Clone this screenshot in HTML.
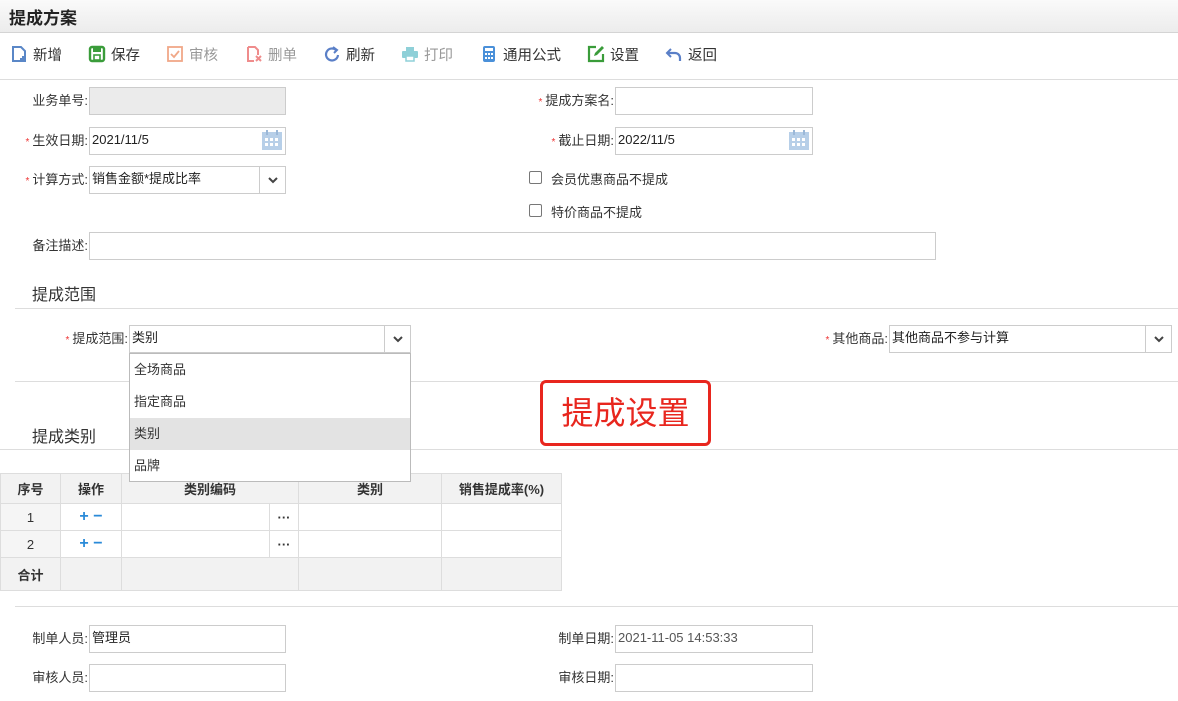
<!DOCTYPE html>
<html><head><meta charset="utf-8"><style>
*{box-sizing:border-box;margin:0;padding:0}
body{width:1178px;height:701px;position:relative;background:#fff;font-family:"Liberation Sans","Noto Sans CJK SC",sans-serif;font-size:13px;color:#333;overflow:hidden}
.a{position:absolute}
.hdr{left:0;top:0;width:1178px;height:33px;background:linear-gradient(#fafafa,#ececec);border-bottom:1px solid #d4d4d4}
.hdr b{position:absolute;left:9px;top:4px;font-size:17px;color:#222}
.tb{top:44px;height:20px;display:flex;align-items:center;font-size:14.5px;color:#333}
.tb svg{margin-right:5px}
.line{height:1px;background:#ddd}
.inp{border:1px solid #ccc;height:28px;background:#fff;padding:0 2px;line-height:24px;font-size:13px;color:#222}
.lbl{font-size:13px;color:#333;text-align:right;line-height:28px}
.lbl i{color:#e33;font-style:normal;font-size:10px;margin-right:3px}
.sec{font-size:16px;color:#333}
.arrow{position:absolute;right:0;top:0;width:26px;height:26px;border-left:1px solid #ccc;display:flex;align-items:center;justify-content:center}
.cb{width:13px;height:13px;border:1px solid #777;border-radius:2px;background:#fff}
table{border-collapse:collapse;font-size:13px}
td{border:1px solid #ddd;text-align:center;color:#333}
.th td{background:#f2f2f2;font-weight:bold;height:30px}
.dd div{height:32px;line-height:32px;padding-left:4px;font-size:13px}
</style></head><body>
<div class="a hdr"><b>提成方案</b></div>
<div class="a tb" style="left:10px"><svg width="18" height="18" viewBox="0 0 18 18"><path d="M3 2h8l4 4v10H3z" fill="none" stroke="#5a87c7" stroke-width="2"/><path d="M13 11v6M10 14h6" stroke="#5a87c7" stroke-width="2"/></svg>新增</div>
<div class="a tb" style="left:88px"><svg width="18" height="18" viewBox="0 0 18 18"><rect x="2" y="2" width="14" height="14" rx="2" fill="none" stroke="#3a9c3a" stroke-width="2.4"/><rect x="5" y="3" width="8" height="4" fill="#3a9c3a"/><rect x="6" y="10" width="6" height="5" fill="none" stroke="#3a9c3a" stroke-width="1.6"/></svg>保存</div>
<div class="a tb" style="left:166px;color:#999"><svg width="18" height="18" viewBox="0 0 18 18"><rect x="2" y="2" width="14" height="14" fill="none" stroke="#f0a888" stroke-width="1.8"/><path d="M5 9l3 3 5-6" fill="none" stroke="#f0a888" stroke-width="1.8"/></svg>审核</div>
<div class="a tb" style="left:245px;color:#999"><svg width="18" height="18" viewBox="0 0 18 18"><path d="M3 2h7l3 3v5M3 2v14h6" fill="none" stroke="#ef8c8c" stroke-width="2"/><path d="M11 11l5 5M16 11l-5 5" stroke="#ef8c8c" stroke-width="2"/></svg>删单</div>
<div class="a tb" style="left:323px"><svg width="18" height="18" viewBox="0 0 18 18"><path d="M13 5a6 6 0 1 0 2 5" fill="none" stroke="#5a7fc7" stroke-width="2.2"/><path d="M10 2l4 3-3 3" fill="none" stroke="#5a7fc7" stroke-width="2"/></svg>刷新</div>
<div class="a tb" style="left:401px;color:#999"><svg width="18" height="18" viewBox="0 0 18 18"><rect x="5" y="2" width="8" height="4" fill="#8fd0d8"/><rect x="1" y="6" width="16" height="7" rx="1" fill="#8fd0d8"/><rect x="5" y="11" width="8" height="5" fill="#fff" stroke="#8fd0d8" stroke-width="1.5"/></svg>打印</div>
<div class="a tb" style="left:480px"><svg width="18" height="18" viewBox="0 0 18 18"><rect x="3" y="1" width="12" height="16" rx="2" fill="#4a90d9"/><rect x="5" y="3" width="8" height="3" fill="#fff"/><g fill="#fff"><rect x="5" y="8" width="2" height="2"/><rect x="8" y="8" width="2" height="2"/><rect x="11" y="8" width="2" height="2"/><rect x="5" y="12" width="2" height="2"/><rect x="8" y="12" width="2" height="2"/><rect x="11" y="12" width="2" height="2"/></g></svg>通用公式</div>
<div class="a tb" style="left:587px"><svg width="18" height="18" viewBox="0 0 18 18"><path d="M9 2H2v14h14V9" fill="none" stroke="#3a9c3a" stroke-width="2.2"/><path d="M7 11l1-3 7-7 2 2-7 7z" fill="#3a9c3a"/></svg>设置</div>
<div class="a tb" style="left:665px"><svg width="18" height="18" viewBox="0 0 18 18"><path d="M6 4L2 8l4 4" fill="none" stroke="#5a7fc7" stroke-width="2"/><path d="M2 8h8a5 5 0 0 1 5 5v3" fill="none" stroke="#5a7fc7" stroke-width="2.2"/></svg>返回</div>
<div class="a line" style="left:0;top:79px;width:1178px"></div>

<div class="a lbl" style="left:0;width:88px;top:87px">业务单号:</div>
<div class="a inp" style="left:89px;top:87px;width:197px;background:#ebebeb"></div>
<div class="a lbl" style="left:500px;width:114px;top:87px"><i>*</i>提成方案名:</div>
<div class="a inp" style="left:615px;top:87px;width:198px"></div>

<div class="a lbl" style="left:0;width:88px;top:127px"><i>*</i>生效日期:</div>
<div class="a inp" style="left:89px;top:127px;width:197px">2021/11/5</div>
<svg class="a" style="left:261px;top:129px" width="22" height="22" viewBox="0 0 22 22"><rect x="1" y="3" width="20" height="18" fill="#b7cfe8"/><rect x="5" y="1" width="2" height="5" fill="#9bb8d8"/><rect x="15" y="1" width="2" height="5" fill="#9bb8d8"/><g fill="#fff"><rect x="4" y="9" width="3" height="3"/><rect x="9" y="9" width="3" height="3"/><rect x="14" y="9" width="3" height="3"/><rect x="4" y="14" width="3" height="3"/><rect x="9" y="14" width="3" height="3"/><rect x="14" y="14" width="3" height="3"/></g></svg>
<div class="a lbl" style="left:500px;width:114px;top:127px"><i>*</i>截止日期:</div>
<div class="a inp" style="left:615px;top:127px;width:198px">2022/11/5</div>
<svg class="a" style="left:788px;top:129px" width="22" height="22" viewBox="0 0 22 22"><rect x="1" y="3" width="20" height="18" fill="#b7cfe8"/><rect x="5" y="1" width="2" height="5" fill="#9bb8d8"/><rect x="15" y="1" width="2" height="5" fill="#9bb8d8"/><g fill="#fff"><rect x="4" y="9" width="3" height="3"/><rect x="9" y="9" width="3" height="3"/><rect x="14" y="9" width="3" height="3"/><rect x="4" y="14" width="3" height="3"/><rect x="9" y="14" width="3" height="3"/><rect x="14" y="14" width="3" height="3"/></g></svg>

<div class="a lbl" style="left:0;width:88px;top:166px"><i>*</i>计算方式:</div>
<div class="a inp" style="left:89px;top:166px;width:197px">销售金额*提成比率<div class="arrow"><svg width="10" height="8"><path d="M1 2l4 4 4-4" fill="none" stroke="#444" stroke-width="2"/></svg></div></div>
<div class="a cb" style="left:529px;top:171px"></div>
<div class="a" style="left:551px;top:169px">会员优惠商品不提成</div>
<div class="a cb" style="left:529px;top:204px"></div>
<div class="a" style="left:551px;top:202px">特价商品不提成</div>

<div class="a lbl" style="left:0;width:88px;top:232px">备注描述:</div>
<div class="a inp" style="left:89px;top:232px;width:847px"></div>

<div class="a sec" style="left:32px;top:281px">提成范围</div>
<div class="a line" style="left:15px;top:308px;width:1163px"></div>
<div class="a lbl" style="left:0;width:128px;top:325px"><i>*</i>提成范围:</div>
<div class="a inp" style="left:129px;top:325px;width:282px">类别<div class="arrow"><svg width="10" height="8"><path d="M1 2l4 4 4-4" fill="none" stroke="#444" stroke-width="2"/></svg></div></div>
<div class="a lbl" style="left:760px;width:128px;top:325px"><i>*</i>其他商品:</div>
<div class="a inp" style="left:889px;top:325px;width:283px">其他商品不参与计算<div class="arrow"><svg width="10" height="8"><path d="M1 2l4 4 4-4" fill="none" stroke="#444" stroke-width="2"/></svg></div></div>
<div class="a line" style="left:15px;top:381px;width:1163px"></div>

<div class="a sec" style="left:32px;top:423px">提成类别</div>
<div class="a line" style="left:0;top:449px;width:1178px"></div>

<table class="a" style="left:0;top:473px;width:562px">
<tr class="th"><td style="width:60px">序号</td><td style="width:61px">操作</td><td colspan="2" style="width:177px">类别编码</td><td style="width:143px">类别</td><td style="width:120px">销售提成率(%)</td></tr>
<tr style="height:27px"><td style="background:#f5f5f5">1</td><td style="color:#2a8ad8;font-weight:bold;font-size:16px">+ −</td><td style="width:148px"></td><td style="font-weight:bold">···</td><td></td><td></td></tr>
<tr style="height:27px"><td style="background:#f5f5f5">2</td><td style="color:#2a8ad8;font-weight:bold;font-size:16px">+ −</td><td></td><td style="font-weight:bold">···</td><td></td><td></td></tr>
<tr style="height:33px;background:#f2f2f2"><td style="font-weight:bold">合计</td><td></td><td colspan="2"></td><td></td><td></td></tr>
</table>

<div class="a dd" style="left:129px;top:353px;width:282px;height:129px;border:1px solid #bbb;background:#fff">
<div>全场商品</div><div>指定商品</div><div style="background:#e3e3e3">类别</div><div>品牌</div></div>

<div class="a" style="left:540px;top:380px;width:171px;height:66px;border:3px solid #e8261e;border-radius:6px;color:#e8261e;font-size:32px;text-align:center;line-height:60px">提成设置</div>

<div class="a line" style="left:15px;top:606px;width:1163px"></div>
<div class="a lbl" style="left:0;width:88px;top:625px">制单人员:</div>
<div class="a inp" style="left:89px;top:625px;width:197px">管理员</div>
<div class="a lbl" style="left:500px;width:114px;top:625px">制单日期:</div>
<div class="a inp" style="left:615px;top:625px;width:198px;color:#555">2021-11-05 14:53:33</div>
<div class="a lbl" style="left:0;width:88px;top:664px">审核人员:</div>
<div class="a inp" style="left:89px;top:664px;width:197px"></div>
<div class="a lbl" style="left:500px;width:114px;top:664px">审核日期:</div>
<div class="a inp" style="left:615px;top:664px;width:198px"></div>
</body></html>
